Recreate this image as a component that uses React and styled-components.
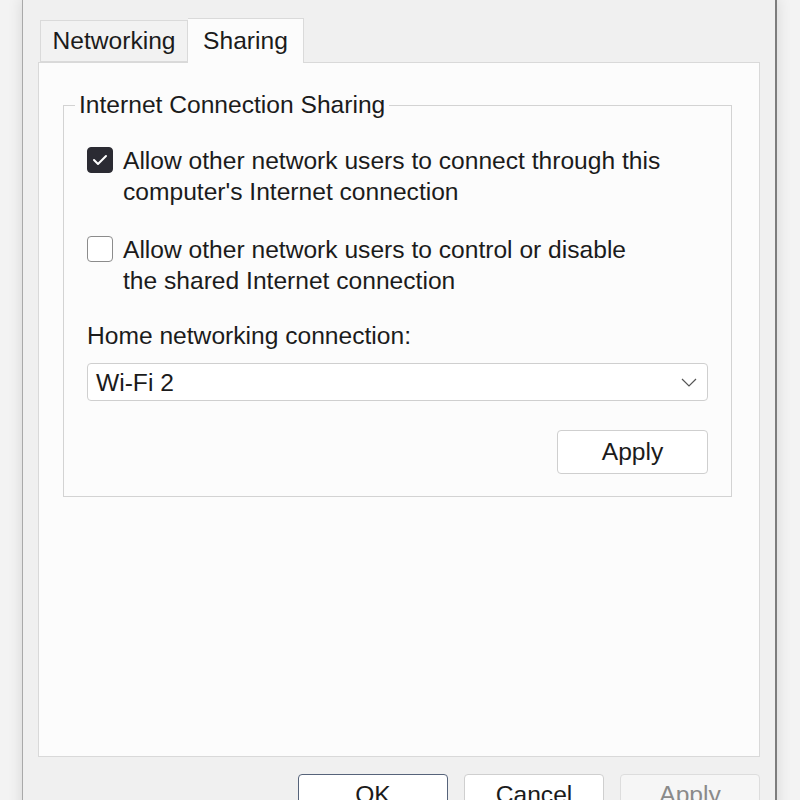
import styled, { createGlobalStyle } from 'styled-components';

const GlobalStyle = createGlobalStyle`
  html, body {
    margin: 0;
    height: 800px;
    overflow: hidden;
    background-color: #f3f3f3;
    font-family: 'Liberation Sans', Arial, sans-serif;
    color: #1b1b1b;
  }
`;

const Desktop = styled.div`
  display: flex;
  height: 800px;
  padding-left: 22px;
  overflow: hidden;
`;

const Window = styled.div`
  box-sizing: border-box;
  width: 755px;
  height: 840px;
  padding: 18px 15px 0 15px;
  background-color: #f0f0f0;
  border-top: 2px solid #fafafa;
  border-left: 1px solid #a9a9a9;
  border-right: 2px solid #7d7d7d;
  box-shadow: 0 0 14px rgba(0, 0, 0, 0.12);
  margin-top: -2px;
`;

const TabStrip = styled.div`
  display: flex;
  align-items: flex-end;
  height: 44px;
  padding-left: 2px;
`;

const Tab = styled.div`
  position: relative;
  z-index: 1;
  box-sizing: border-box;
  display: flex;
  align-items: center;
  justify-content: center;
  width: ${(p) => p.$width}px;
  height: ${(p) => (p.$active ? 45 : 42)}px;
  margin-bottom: ${(p) => (p.$active ? -1 : 0)}px;
  font-size: 24.6px;
  background-color: ${(p) => (p.$active ? '#fcfcfc' : '#f2f2f2')};
  border: 1px solid #dadada;
  border-bottom: ${(p) => (p.$active ? 'none' : '1px solid #dadada')};
  border-left: ${(p) => (p.$active ? 'none' : '1px solid #dadada')};
`;

const Panel = styled.div`
  box-sizing: border-box;
  height: 695px;
  padding: 28px 27px 0 24px;
  background-color: #fcfcfc;
  border: 1px solid #d9d9d9;
`;

const GroupBox = styled.fieldset`
  margin: 0;
  padding: 0 23px 22px 23px;
  border: 1px solid #d3d3d3;
`;

const Legend = styled.legend`
  margin-left: -12px;
  padding: 0 4px;
  font-size: 24.6px;
  line-height: 28px;
`;

const Content = styled.div`
  display: flex;
  flex-direction: column;
  padding-top: 26px;
  font-size: 24.6px;
  line-height: 31px;
`;

const CheckRow = styled.label`
  display: flex;
  align-items: flex-start;
  gap: 10px;
  margin-bottom: ${(p) => p.$gap}px;
`;

const Box = styled.span`
  box-sizing: border-box;
  flex: none;
  display: flex;
  align-items: center;
  justify-content: center;
  width: 26px;
  height: 26px;
  margin-top: 2px;
  border-radius: 4px;
  background-color: ${(p) => (p.$checked ? '#2b2b33' : '#ffffff')};
  border: 1.5px solid ${(p) => (p.$checked ? '#2b2b33' : '#8c8c8c')};
`;

const FieldLabel = styled.div`
  margin-bottom: 12px;
`;

const Select = styled.div`
  box-sizing: border-box;
  display: flex;
  align-items: center;
  justify-content: space-between;
  height: 38px;
  padding: 0 10px 0 8px;
  background-color: #ffffff;
  border: 1px solid #cfcfcf;
  border-radius: 4px;
`;

const ApplyRow = styled.div`
  display: flex;
  justify-content: flex-end;
  margin-top: 29px;
`;

const Button = styled.button`
  box-sizing: border-box;
  width: ${(p) => p.$width}px;
  height: ${(p) => p.$height || 42}px;
  padding: 0;
  font-family: inherit;
  font-size: 24.6px;
  color: ${(p) => (p.$disabled ? '#8a8a8a' : '#1b1b1b')};
  background-color: ${(p) => (p.$disabled ? '#f6f6f6' : '#ffffff')};
  border: 1px solid ${(p) => (p.$primary ? '#56637a' : p.$disabled ? '#dddddd' : '#cfcfcf')};
  border-radius: 4px;
`;

const Footer = styled.div`
  display: flex;
  justify-content: flex-end;
  gap: 16px;
  padding-top: 17px;
`;

const Check = () => (
  <svg width="16" height="12" viewBox="0 0 16 12" fill="none">
    <polyline points="2,6 6,10 14,2" stroke="#ffffff" strokeWidth="2" strokeLinecap="round" strokeLinejoin="round" />
  </svg>
);

const Chevron = () => (
  <svg width="16" height="9" viewBox="0 0 16 9" fill="none">
    <polyline points="1,1 8,8 15,1" stroke="#555555" strokeWidth="1.2" />
  </svg>
);

export default function App() {
  return (
    <>
      <GlobalStyle />
      <Desktop>
        <Window>
          <TabStrip>
            <Tab $width={148}>Networking</Tab>
            <Tab $width={116} $active>Sharing</Tab>
          </TabStrip>
          <Panel>
            <GroupBox>
              <Legend>Internet Connection Sharing</Legend>
              <Content>
                <CheckRow $gap={27}>
                  <Box $checked><Check /></Box>
                  <span>
                    Allow other network users to connect through this
                    <br />
                    computer's Internet connection
                  </span>
                </CheckRow>
                <CheckRow $gap={24}>
                  <Box />
                  <span>
                    Allow other network users to control or disable
                    <br />
                    the shared Internet connection
                  </span>
                </CheckRow>
                <FieldLabel>Home networking connection:</FieldLabel>
                <Select>
                  <span>Wi-Fi 2</span>
                  <Chevron />
                </Select>
                <ApplyRow>
                  <Button $width={151} $height={44}>Apply</Button>
                </ApplyRow>
              </Content>
            </GroupBox>
          </Panel>
          <Footer>
            <Button $width={150} $primary>OK</Button>
            <Button $width={140}>Cancel</Button>
            <Button $width={140} $disabled>Apply</Button>
          </Footer>
        </Window>
      </Desktop>
    </>
  );
}
